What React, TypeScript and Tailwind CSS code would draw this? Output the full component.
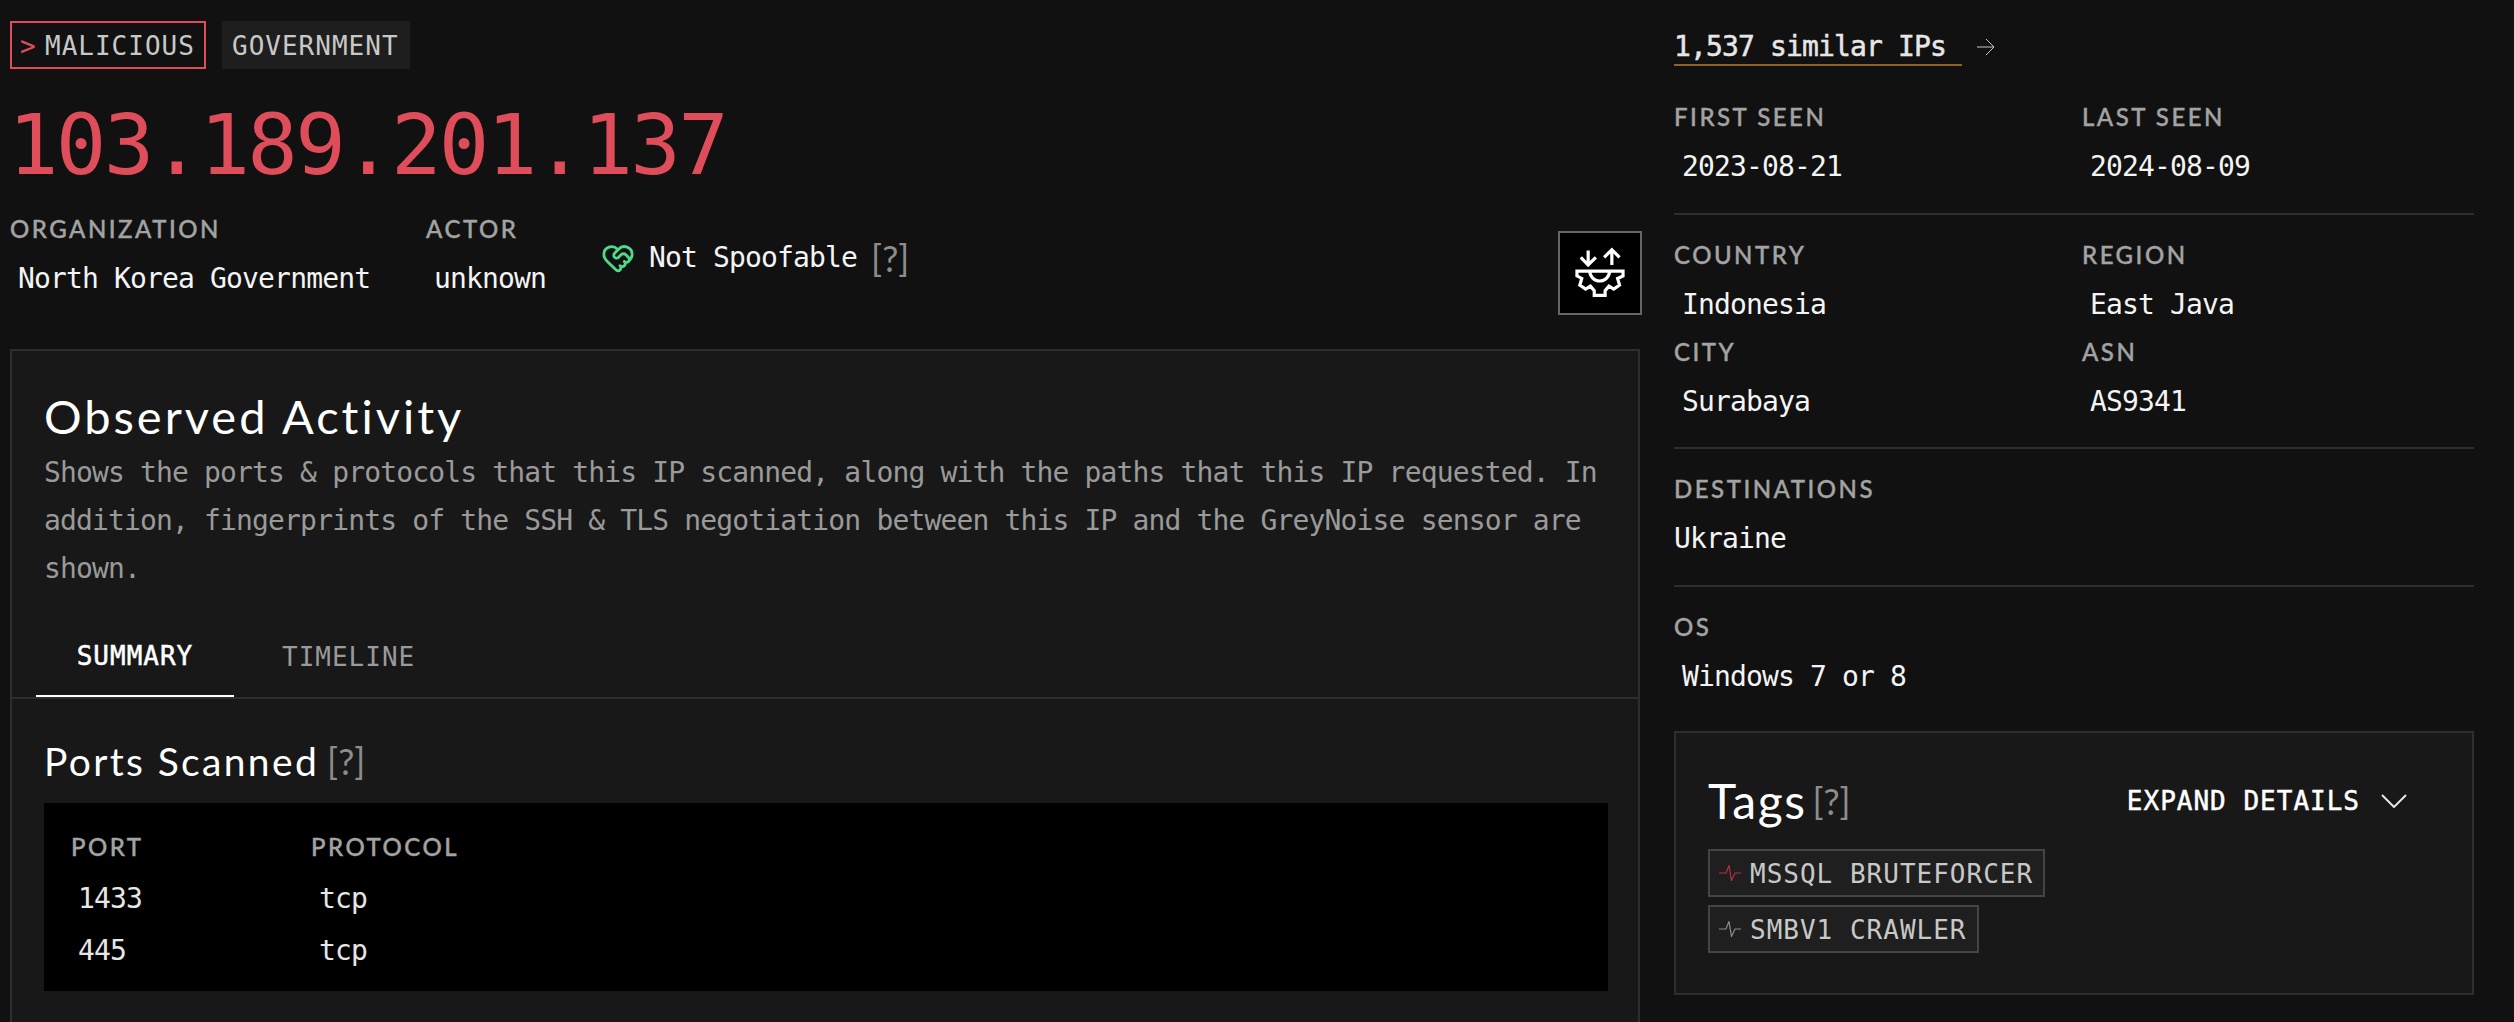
import React from 'react';
import { HeartHandshake } from 'lucide-react';

const mono = "font-['DejaVu_Sans_Mono',monospace]";
const lato = "font-['Lato',sans-serif]";
const body = `${mono} text-[28px] leading-[32px] tracking-[-0.85px]`;
const caps = `${mono} text-[26px] leading-[32px] tracking-[1px]`;
const medium = '[-webkit-text-stroke:0.5px_currentColor]';

const Help: React.FC<{ className?: string }> = ({ className }) => (
  <span className={`${lato} text-[36px] font-normal leading-[32px] text-[#8c8c8c] ${className || ''}`}>[?]</span>
);

const Label: React.FC<{ children: React.ReactNode }> = ({ children }) => (
  <div className={`${lato} whitespace-nowrap text-[24px] font-medium leading-[24px] tracking-[2.5px] text-[#a3a3a3] [-webkit-text-stroke:0.4px_currentColor]`}>{children}</div>
);

const Field: React.FC<{ label: string; value: string; flush?: boolean }> = ({ label, value, flush }) => (
  <div>
    <Label>{label}</Label>
    <div className={`${body} mb-[-1px] mt-[22px] whitespace-nowrap text-[#f4f4f4] ${flush ? '' : 'ml-[8px]'}`}>{value}</div>
  </div>
);

const Pulse: React.FC<{ color: string }> = ({ color }) => (
  <svg width="22" height="16" viewBox="0 0 22 16" fill="none" stroke={color} strokeWidth="1.2">
    <polyline points="0,8 7,8 10,0.5 12.5,15.5 16,8 22,8" />
  </svg>
);

const Tag: React.FC<{ name: string; color: string }> = ({ name, color }) => (
  <div className="flex h-[48px] w-fit items-center gap-[9px] border-2 border-[#444444] bg-[#1f1f1f] pl-[9px] pr-[10px]">
    <Pulse color={color} />
    <span className={`${caps} pt-[1px] text-[#c8c8c8]`}>{name}</span>
  </div>
);

const GearIcon = () => (
  <svg width="80" height="80" viewBox="0 0 250 250" fill="none" stroke="white" strokeWidth="10">
    <path d="M88 55V100M65 76L88 100L112 76" />
    <path d="M162 55V100M138 76L162 52L186 76" />
    <path d="M53 119H197V134L180 142L186 163L168 175L153 166L141 180V195H107V180L95 166L80 175L62 163L68 142L53 134Z" />
    <path d="M93 119A31 31 0 0 0 155 119" />
  </svg>
);

const Port: React.FC<{ port: string; proto: string; className?: string }> = ({ port, proto, className }) => (
  <div className={`flex ${body} text-[#e6e6e6] ${className || ''}`}>
    <span className="w-[240px] pl-[7px]">{port}</span>
    <span className="pl-[8px]">{proto}</span>
  </div>
);

export default function App() {
  return (
    <div className="flex h-[1022px] w-[2514px] overflow-hidden bg-[#111111] pl-[10px]">
      <div className="flex w-[1630px] flex-col">
        <div className="mt-[21px] flex gap-[16px]">
          <div className="flex h-[48px] w-[196px] items-center border-2 border-[#e04d5a] pl-[8px] pt-[2px]">
            <span className={`${caps} w-[25px] text-[#e04d5a]`}>&gt;</span>
            <span className={`${caps} text-[#c8c8c8]`}>MALICIOUS</span>
          </div>
          <div className="flex h-[48px] w-[188px] items-center bg-[#1e1e1e] pl-[10px] pt-[2px]">
            <span className={`${caps} text-[#c8c8c8]`}>GOVERNMENT</span>
          </div>
        </div>

        <div className={`${mono} mb-[-2px] ml-[-2px] mt-[28px] text-[84px] leading-[96px] tracking-[-2.7px] text-[#e04d5a]`}>103.189.201.137</div>

        <div className="mt-[26px] flex h-[98px] items-start">
          <div className="w-[416px]">
            <Field label="ORGANIZATION" value="North Korea Government" />
          </div>
          <div className="w-[175px]">
            <Field label="ACTOR" value="unknown" />
          </div>
          <div className="mt-[24px] flex items-center gap-[14px]">
            <HeartHandshake size={34} strokeWidth={2} className="text-[#4fd98a]" />
            <span className={`${body} text-[#f4f4f4]`}>Not Spoofable</span>
            <Help />
          </div>
          <div className="ml-auto mr-[-2px] mt-[14px] flex h-[84px] w-[84px] items-center justify-center border-2 border-[#666666] bg-black">
            <GearIcon />
          </div>
        </div>

        <div className="mt-[34px] flex flex-1 flex-col border-x-2 border-t-2 border-[#2e2e2e] bg-[#181818]">
          <div className="pl-[32px] pr-[30px] pt-[37px]">
            <h1 className={`${lato} text-[47px] font-normal leading-[56px] tracking-[3px] text-white`}>Observed Activity</h1>
            <p className={`${mono} mt-[5px] text-[28px] leading-[48px] tracking-[-0.85px] text-[#9a9a9a]`}>
              Shows the ports &amp; protocols that this IP scanned, along with the paths that this IP requested. In addition, fingerprints of the SSH &amp; TLS negotiation between this IP and the GreyNoise sensor are shown.
            </p>
          </div>

          <div className="mt-[22px] flex gap-[48px] border-b-2 border-[#2e2e2e] pl-[24px]">
            <div className={`${caps} ${medium} flex h-[82px] w-[198px] items-center justify-center border-b-2 border-white pt-[2px] text-white`}>SUMMARY</div>
            <div className={`${caps} flex h-[82px] items-center pt-[2px] text-[#9a9a9a]`}>TIMELINE</div>
          </div>

          <div className="pl-[32px] pr-[30px]">
            <div className="mt-[38px] flex h-[48px] items-center gap-[8px]">
              <h2 className={`${lato} text-[39px] font-normal leading-[48px] tracking-[2.35px] text-white`}>Ports Scanned</h2>
              <Help />
            </div>
            <div className="mt-[18px] bg-black pb-[24px] pl-[27px] pt-[32px]">
              <div className="flex">
                <div className="w-[240px]"><Label>PORT</Label></div>
                <Label>PROTOCOL</Label>
              </div>
              <Port port="1433" proto="tcp" className="mt-[24px]" />
              <Port port="445" proto="tcp" className="mt-[20px]" />
            </div>
          </div>
        </div>
      </div>

      <div className="ml-[34px] w-[800px]">
        <div className="mt-[30px] flex items-start">
          <div className={`${body} ${medium} h-[36px] w-[288px] border-b-2 border-[#8a6428] pt-[1px] text-[#e6e6e6]`}>1,537 similar IPs</div>
          <svg className="ml-[15px] mt-[8px]" width="18" height="18" viewBox="0 0 18 18" fill="none" stroke="#c8c8c8" strokeWidth="1">
            <path d="M0 9H17M9 1L17 9L9 17" />
          </svg>
        </div>

        <div className="mt-[39px] grid grid-cols-[408px_1fr]">
          <Field label="FIRST SEEN" value="2023-08-21" />
          <Field label="LAST SEEN" value="2024-08-09" />
        </div>
        <div className="mt-[31px] h-[2px] bg-[#2e2e2e]" />

        <div className="mt-[28px] grid grid-cols-[408px_1fr] gap-y-[20px]">
          <Field label="COUNTRY" value="Indonesia" />
          <Field label="REGION" value="East Java" />
          <Field label="CITY" value="Surabaya" />
          <Field label="ASN" value="AS9341" />
        </div>
        <div className="mt-[30px] h-[2px] bg-[#2e2e2e]" />

        <div className="mt-[28px]">
          <Field label="DESTINATIONS" value="Ukraine" flush />
        </div>
        <div className="mt-[31px] h-[2px] bg-[#2e2e2e]" />

        <div className="mt-[28px]">
          <Field label="OS" value="Windows 7 or 8" />
        </div>

        <div className="mt-[39px] border-2 border-[#2e2e2e] bg-[#181818] pb-[40px] pl-[32px] pr-[65px] pt-[40px]">
          <div className="flex h-[56px] items-center">
            <h2 className={`${lato} text-[48px] font-normal leading-[56px] tracking-[1.5px] text-white`}>Tags</h2>
            <Help className="ml-[6px]" />
            <div className={`${caps} ${medium} ml-auto flex items-center gap-[21px] text-white`}>
              EXPAND DETAILS
              <svg width="26" height="14" viewBox="0 0 26 14" fill="none" stroke="#e6e6e6" strokeWidth="2">
                <path d="M1 1L13 13L25 1" />
              </svg>
            </div>
          </div>
          <div className="mt-[20px] flex flex-col gap-[8px]">
            <Tag name="MSSQL BRUTEFORCER" color="#b5303f" />
            <Tag name="SMBV1 CRAWLER" color="#8c8c8c" />
          </div>
        </div>
      </div>
    </div>
  );
}
